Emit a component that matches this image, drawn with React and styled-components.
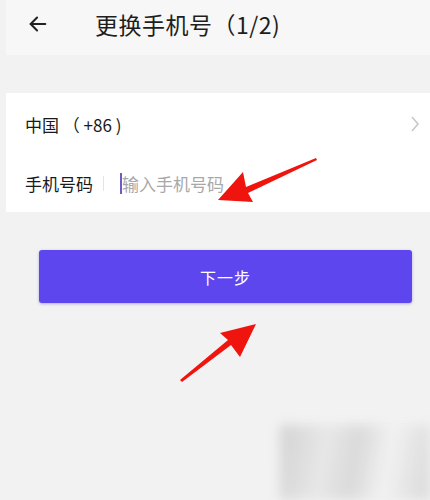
import styled, { createGlobalStyle } from "styled-components";

const Global = createGlobalStyle`
  body {
    margin: 0;
    background: #f2f2f2;
    font-family: "Noto Sans CJK SC", "Noto Sans", sans-serif;
  }
`;

const Page = styled.div`
  position: relative;
  width: 430px;
  height: 500px;
  overflow: hidden;
  background: #f2f2f2;
`;

const Frame = styled.div`
  margin-left: 6px;
`;

const Header = styled.header`
  height: 55px;
  background: #f7f7f7;
  display: flex;
  align-items: center;
  padding-bottom: 8px;
  box-sizing: border-box;
`;

const Back = styled.div`
  width: 89px;
  padding-left: 21px;
  box-sizing: border-box;
  display: flex;
  align-items: center;
`;

const Title = styled.h1`
  margin: 0;
  font-size: 23px;
  font-weight: 400;
  color: #1e1e1e;
  letter-spacing: 0.5px;
`;

const Card = styled.section`
  margin-top: 38px;
  background: #fff;
  padding: 0 10px 0 19px;
`;

const Row = styled.div`
  height: ${(p) => p.h}px;
  display: flex;
  align-items: center;
  font-size: 17px;
  color: #1a1a1a;
`;

const Label = styled.span`
  flex: ${(p) => (p.grow ? 1 : "none")};
  white-space: pre;
`;

const Divider = styled.span`
  width: 1px;
  height: 15px;
  background: #e4e4e4;
  margin: 0 16px 0 10px;
`;

const Caret = styled.span`
  width: 2px;
  height: 21px;
  background: #6a5ccc;
`;

const Placeholder = styled.span`
  color: #a8a8a8;
  font-size: 17px;
`;

const Button = styled.button`
  display: block;
  margin: 38px 0 0 33px;
  width: 373px;
  height: 53px;
  border: none;
  border-radius: 3px;
  background: #5e46ef;
  color: #fff;
  font-family: inherit;
  font-size: 16px;
  letter-spacing: 1px;
  box-shadow: 0 1px 3px rgba(60, 40, 160, 0.35);
`;

const Overlay = styled.svg`
  position: absolute;
  left: 0;
  top: 0;
  pointer-events: none;
`;

const Watermark = styled.div`
  position: absolute;
  left: 280px;
  top: 425px;
  width: 150px;
  height: 75px;
  background: linear-gradient(100deg, #cdcdcd 0%, #e6e6e6 30%, #d6d6d6 50%, #f2f2f2 70%, #d4d4d4 100%);
  filter: blur(6px);
  opacity: 0.85;
`;

export default function App() {
  return (
    <Page>
      <Global />
      <Frame>
        <Header>
          <Back>
            <svg width="22" height="22" viewBox="0 0 24 24" fill="none" stroke="#222" strokeWidth="2.2" strokeLinecap="round" strokeLinejoin="round">
              <path d="M20 12H4" />
              <path d="M11 5l-7 7 7 7" />
            </svg>
          </Back>
          <Title>更换手机号（1/2)</Title>
        </Header>
        <Card>
          <Row h={62}>
            <Label grow>中国 （ +86 )</Label>
            <svg width="10" height="16" viewBox="0 0 10 16" fill="none" stroke="#c8c8c8" strokeWidth="1.6">
              <path d="M2 1l6 7-6 7" />
            </svg>
          </Row>
          <Row h={57}>
            <Label>手机号码</Label>
            <Divider />
            <Caret />
            <Placeholder>输入手机号码</Placeholder>
          </Row>
        </Card>
        <Button>下一步</Button>
      </Frame>
      <Watermark />
      <Overlay width="430" height="500" viewBox="0 0 430 500">
        <polygon points="316,158 246,187 243,172 218,200 253,202 248,193 317,160" fill="#f0140f" />
        <polygon points="182,382 231,345 240,357 256,324 220,333 228,340 180,380" fill="#f0140f" />
      </Overlay>
    </Page>
  );
}
